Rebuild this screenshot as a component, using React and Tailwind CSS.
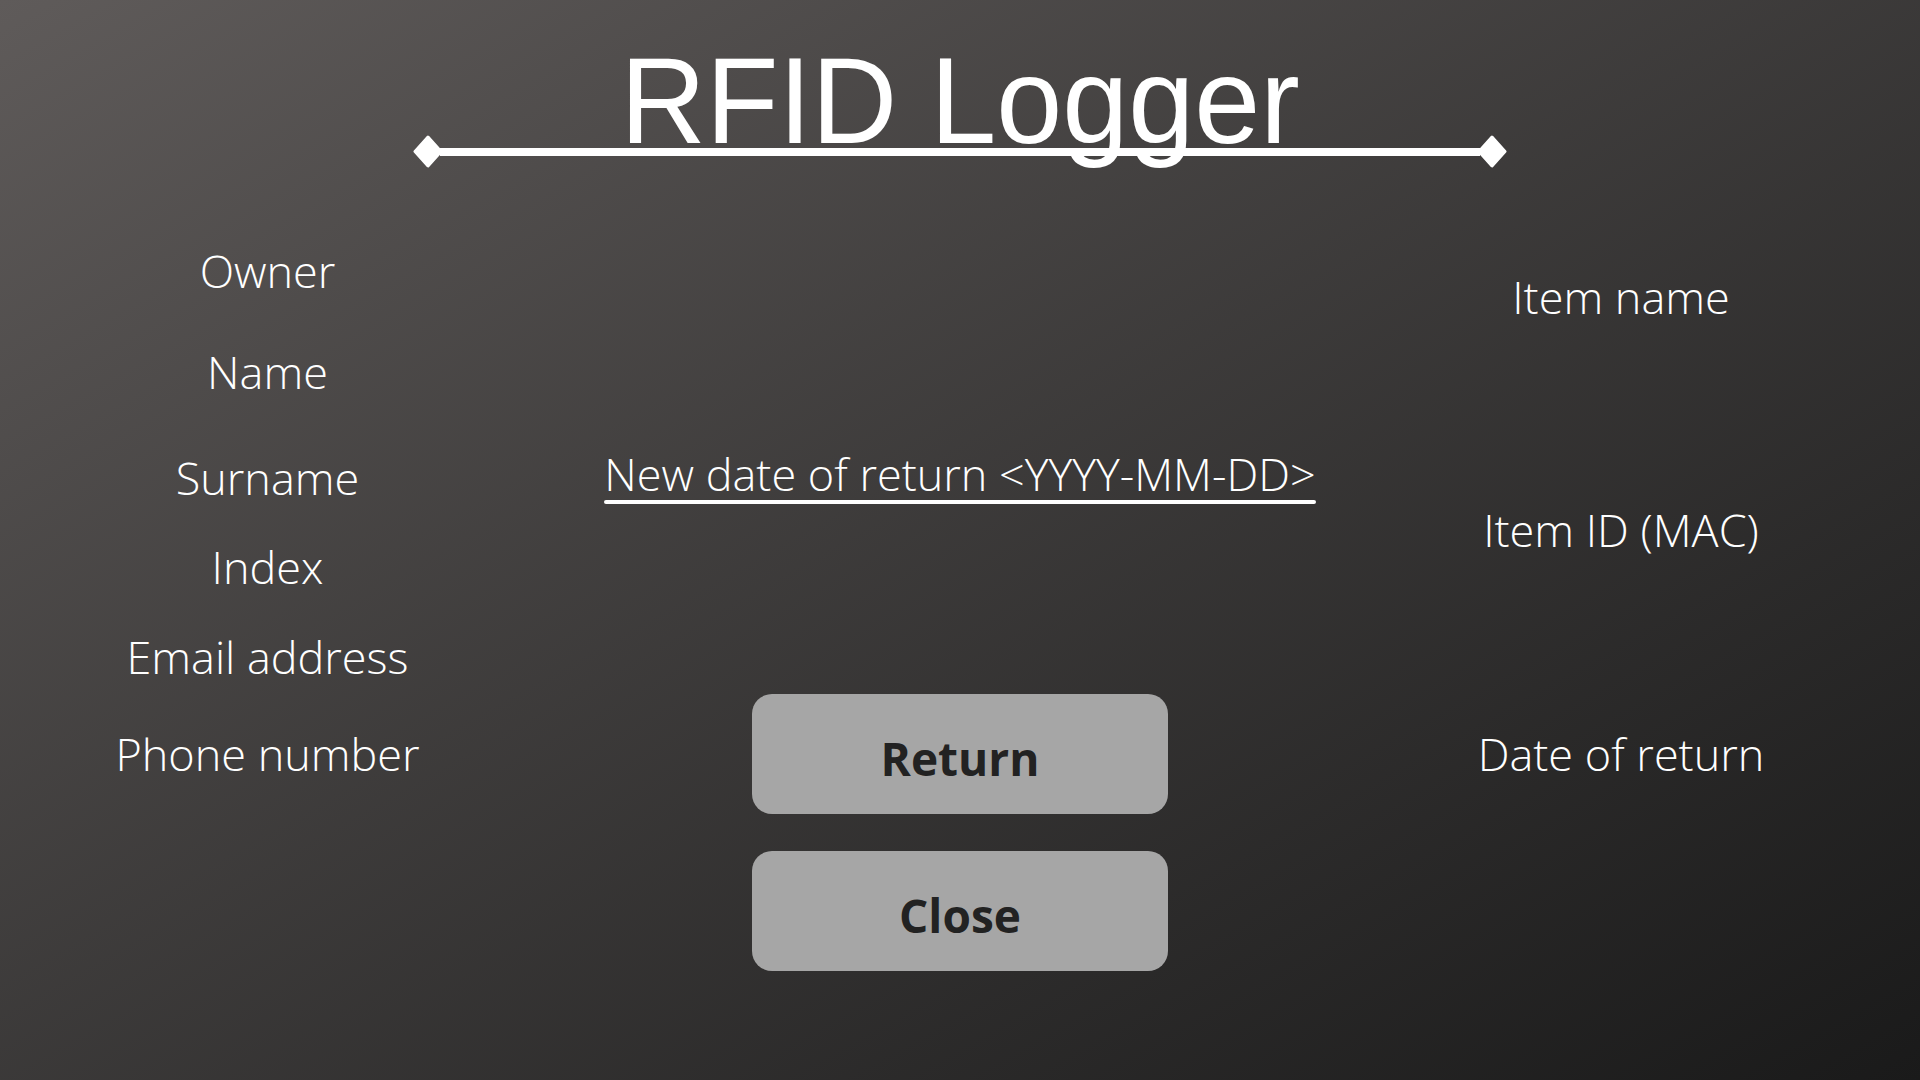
import React from "react";

function Diamond() {
  return (
    <svg width="30" height="33" viewBox="0 0 30 33" className="shrink-0">
      <path d="M15 2 L28 16.5 L15 31 L2 16.5 Z" fill="#ffffff" stroke="#ffffff" strokeWidth="3" strokeLinejoin="round" />
    </svg>
  );
}

const label = "h-[60px] leading-[60px] text-[45px] font-light text-white whitespace-nowrap";

export default function App() {
  return (
    <div
      className="w-full h-[1080px] overflow-hidden bg-linear-to-br from-[#5f5b5a] to-[#1a1a1a] text-white"
      style={{ fontFamily: '"Open Sans", "Noto Sans", sans-serif' }}
    >
      {/* Header */}
      <div className="pt-[39px] flex flex-col items-center">
        <h1
          className="text-[123px] leading-none font-normal text-white scale-x-[0.965] whitespace-nowrap"
          style={{ fontFamily: '"Liberation Sans", Arial, sans-serif' }}
        >
          RFID Logger
        </h1>
        <div className="mt-[-27px] w-[1094px] h-[33px] flex items-center">
          <Diamond />
          <div className="flex-1 h-[8px] bg-white -mx-[3px]" />
          <Diamond />
        </div>
      </div>

      {/* Body */}
      <div className="grid grid-cols-[535px_1fr_535px]">
        {/* Left column */}
        <div className="flex flex-col items-center pt-[73px]">
          <div className={label}>Owner</div>
          <div className={label + " mt-[41px]"}>Name</div>
          <div className={label + " mt-[46px]"}>Surname</div>
          <div className={label + " mt-[29px]"}>Index</div>
          <div className={label + " mt-[30px]"}>Email address</div>
          <div className={label + " mt-[37px]"}>Phone number</div>
        </div>

        {/* Middle column */}
        <div className="flex flex-col items-center pt-[276px]">
          <div className="flex flex-col items-stretch">
            <div className={label}>New date of return &lt;YYYY-MM-DD&gt;</div>
            <div className="mt-[-4px] h-[4px] rounded-full bg-white" />
          </div>
          <button className="mt-[190px] w-[416px] h-[120px] rounded-[20px] bg-[#a6a6a6] flex items-center justify-center pt-[8px] text-[46px] font-bold text-[#222222] leading-none">
            Return
          </button>
          <button className="mt-[37px] w-[416px] h-[120px] rounded-[20px] bg-[#a6a6a6] flex items-center justify-center pt-[8px] text-[46px] font-bold text-[#222222] leading-none">
            Close
          </button>
        </div>

        {/* Right column */}
        <div className="flex flex-col items-center pt-[99px] pr-[63px]">
          <div className={label}>Item name</div>
          <div className={label + " mt-[173px]"}>Item ID (MAC)</div>
          <div className={label + " mt-[164px]"}>Date of return</div>
        </div>
      </div>
    </div>
  );
}
